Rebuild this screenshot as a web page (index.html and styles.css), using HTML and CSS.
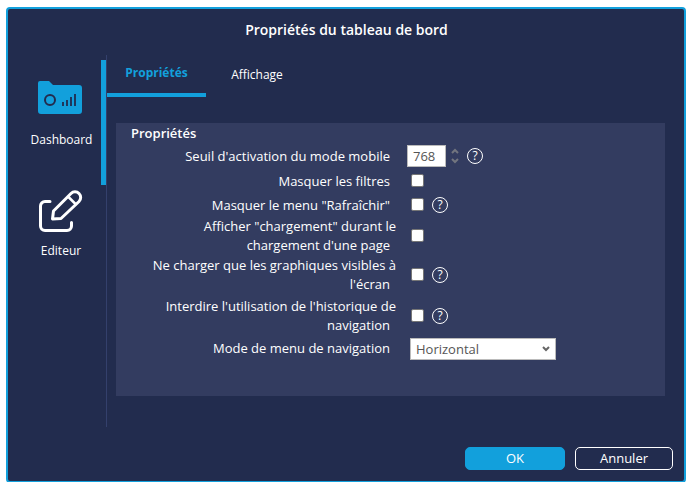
FILE: index.html
```html
<!DOCTYPE html>
<html lang="fr">
<head>
  <meta charset="UTF-8" />
  <title>Propriétés du tableau de bord</title>
  <link rel="stylesheet" href="styles.css">
</head>
<body>
  <div class="dialog">
    <div class="dialog-title">Propriétés du tableau de bord</div>

    <div class="dialog-body">
      <div class="sidebar">
        <div class="side-item active">
          <svg class="side-icon" width="44" height="33" viewBox="0 0 44 33">
            <path d="M2 0h9l4 4h26a3 3 0 0 1 3 3v23a3 3 0 0 1-3 3H3a3 3 0 0 1-3-3V2a2 2 0 0 1 2-2z" fill="#12a0dc"/>
            <circle cx="12" cy="19" r="5" fill="none" stroke="#222c4e" stroke-width="2"/>
            <path d="M25 25v-4M29 25v-6M33 25v-9M37 25v-12" stroke="#222c4e" stroke-width="1.800" fill="none"/>
          </svg>
          <div class="side-label">Dashboard</div>
        </div>
        <div class="side-item">
          <svg class="side-icon" width="44" height="44" viewBox="0 0 44 44">
            <path d="M11 11.500H6A4.500 4.500 0 0 0 1.500 16v20A4.500 4.500 0 0 0 6 40.500h22a4.500 4.500 0 0 0 4.500-4.500v-3.500" fill="none" stroke="#fff" stroke-width="3" stroke-linecap="round"/>
            <path d="M13.500 29l1-8L32 3.500a5.500 5.500 0 0 1 8 8L22 28.500z" fill="none" stroke="#fff" stroke-width="3" stroke-linejoin="round"/>
            <path d="M29 6.500l8.500 8.500" fill="none" stroke="#fff" stroke-width="2.500"/>
          </svg>
          <div class="side-label">Editeur</div>
        </div>
      </div>

      <div class="main">
        <div class="tabs">
          <div class="tab active">Propriétés</div>
          <div class="tab">Affichage</div>
        </div>

        <div class="panel">
          <div class="panel-title">Propriétés</div>

          <div class="row">
            <div class="row-label">Seuil d'activation du mode mobile<i></i></div>
            <div class="row-field">
              <div class="number-input">768</div>
              <svg class="spinner" width="8" height="16" viewBox="0 0 8 16">
                <path d="M1 5l3-3 3 3M1 11l3 3 3-3" fill="none" stroke="#72757f" stroke-width="2"/>
              </svg>
              <span class="help">?</span>
            </div>
          </div>
          <div class="row spaced">
            <div class="row-label">Masquer les filtres<i></i></div>
            <div class="row-field"><span class="check"></span></div>
          </div>
          <div class="row nudged">
            <div class="row-label">Masquer le menu "Rafraîchir"<i></i></div>
            <div class="row-field"><span class="check"></span><span class="help">?</span></div>
          </div>
          <div class="row">
            <div class="row-label">Afficher "chargement" durant le chargement d'une page<i></i></div>
            <div class="row-field"><span class="check"></span></div>
          </div>
          <div class="row">
            <div class="row-label">Ne charger que les graphiques visibles à l'écran<i></i></div>
            <div class="row-field"><span class="check"></span><span class="help">?</span></div>
          </div>
          <div class="row spaced">
            <div class="row-label">Interdire l'utilisation de l'historique de navigation<i></i></div>
            <div class="row-field"><span class="check"></span><span class="help">?</span></div>
          </div>
          <div class="row nudged">
            <div class="row-label">Mode de menu de navigation<i></i></div>
            <div class="row-field">
              <div class="select">Horizontal
                <svg width="8" height="6" viewBox="0 0 8 6"><path d="M1 1l3 3 3-3" fill="none" stroke="#666" stroke-width="2"/></svg>
              </div>
            </div>
          </div>
        </div>
      </div>
    </div>

    <div class="dialog-footer">
      <div class="btn btn-ok">OK</div>
      <div class="btn btn-cancel">Annuler</div>
    </div>
  </div>
</body>
</html>
```

FILE: styles.css
```css
html, body {
  margin: 0;
  height: 100%;
  background-color: #fff;
  overflow: hidden;
}

body {
  padding: 7px 6px 0 6px;
  box-sizing: border-box;
  font-family: 'Open Sans', sans-serif;
  font-size: 13px;
  color: #fff;
}

.dialog {
  box-sizing: border-box;
  height: 476px;
  background-color: #222c4e;
  border: 2px solid #12a0dc;
  border-radius: 4px;
  display: flex;
  flex-direction: column;
}

.dialog-title {
  height: 46px;
  padding-left: 1px;
  line-height: 42px;
  text-align: center;
  font-size: 14px;
  font-weight: 600;
}

.dialog-body {
  display: flex;
  height: 372px;
}

.sidebar {
  box-sizing: border-box;
  width: 99px;
  height: 372px;
  border-right: 1px solid #34406c;
  padding-top: 5px;
}

.side-item {
  box-sizing: border-box;
  width: 93px;
  padding: 5px 0 0 12px;
  text-align: center;
}

.side-item.active {
  width: 98px;
  height: 125px;
  padding: 21px 0 0 11px;
  border-right: 5px solid #12a0dc;
}

.side-icon {
  display: block;
  margin: 0 auto;
}

.side-label {
  margin-top: 9px;
  padding-left: 1px;
  font-size: 12px;
  line-height: 16px;
}

.side-item.active .side-label {
  margin-top: 18px;
  padding-left: 3px;
}

.main {
  flex: 1;
}

.tabs {
  display: flex;
  height: 42px;
  font-size: 12px;
}

.tab {
  box-sizing: border-box;
  width: 102px;
  height: 42px;
  padding-top: 6px;
  line-height: 28px;
  text-align: center;
}

.tab.active {
  width: 99px;
  padding-top: 4px;
  color: #12a0dc;
  font-weight: 700;
  border-bottom: 4px solid #12a0dc;
}

.panel {
  box-sizing: border-box;
  height: 273px;
  margin: 26px 19px 0 9px;
  padding-top: 2px;
  background-color: #333c60;
}

.panel-title {
  padding-left: 15px;
  margin-bottom: 3px;
  font-weight: 600;
  line-height: 16px;
}

.row {
  display: flex;
  align-items: center;
  min-height: 23px;
}

.row.spaced {
  margin-top: 2px;
}

.row.nudged {
  margin-top: 1px;
}

.row-label {
  box-sizing: border-box;
  width: 280px;
  padding: 1px 0 0 36px;
  text-align: right;
  line-height: 19px;
}

.row-label i {
  display: inline-block;
  width: 6px;
}

.row-field {
  display: flex;
  align-items: center;
  margin-left: 15px;
}

.number-input {
  box-sizing: border-box;
  width: 39px;
  height: 22px;
  margin-left: -4px;
  padding-left: 5px;
  line-height: 20px;
  background-color: #fff;
  border: 1px solid #bbb;
  color: #555;
}

.spinner {
  margin-left: 5px;
}

.check {
  box-sizing: border-box;
  width: 13px;
  height: 13px;
  background-color: #fff;
  border: 1px solid #767676;
  border-radius: 2px;
}

.help {
  box-sizing: border-box;
  width: 16px;
  height: 16px;
  margin-left: 8px;
  border: 1.500px solid #fff;
  border-radius: 50%;
  font-size: 12px;
  line-height: 13px;
  text-align: center;
}

.select {
  box-sizing: border-box;
  display: flex;
  align-items: center;
  justify-content: space-between;
  width: 146px;
  height: 22px;
  margin: 2px 0 0 -1px;
  padding: 0 5px 0 5px;
  background-color: #fff;
  border: 1px solid #bbb;
  color: #555;
}

.dialog-footer {
  display: flex;
  justify-content: flex-end;
  gap: 10px;
  padding: 20px 11px 0 0;
}

.btn {
  box-sizing: border-box;
  height: 23px;
  line-height: 21px;
  text-align: center;
  border-radius: 5px;
}

.btn-ok {
  width: 100px;
  background-color: #12a0dc;
  border: 1px solid #12a0dc;
}

.btn-cancel {
  width: 98px;
  border: 1px solid #fff;
}
```
